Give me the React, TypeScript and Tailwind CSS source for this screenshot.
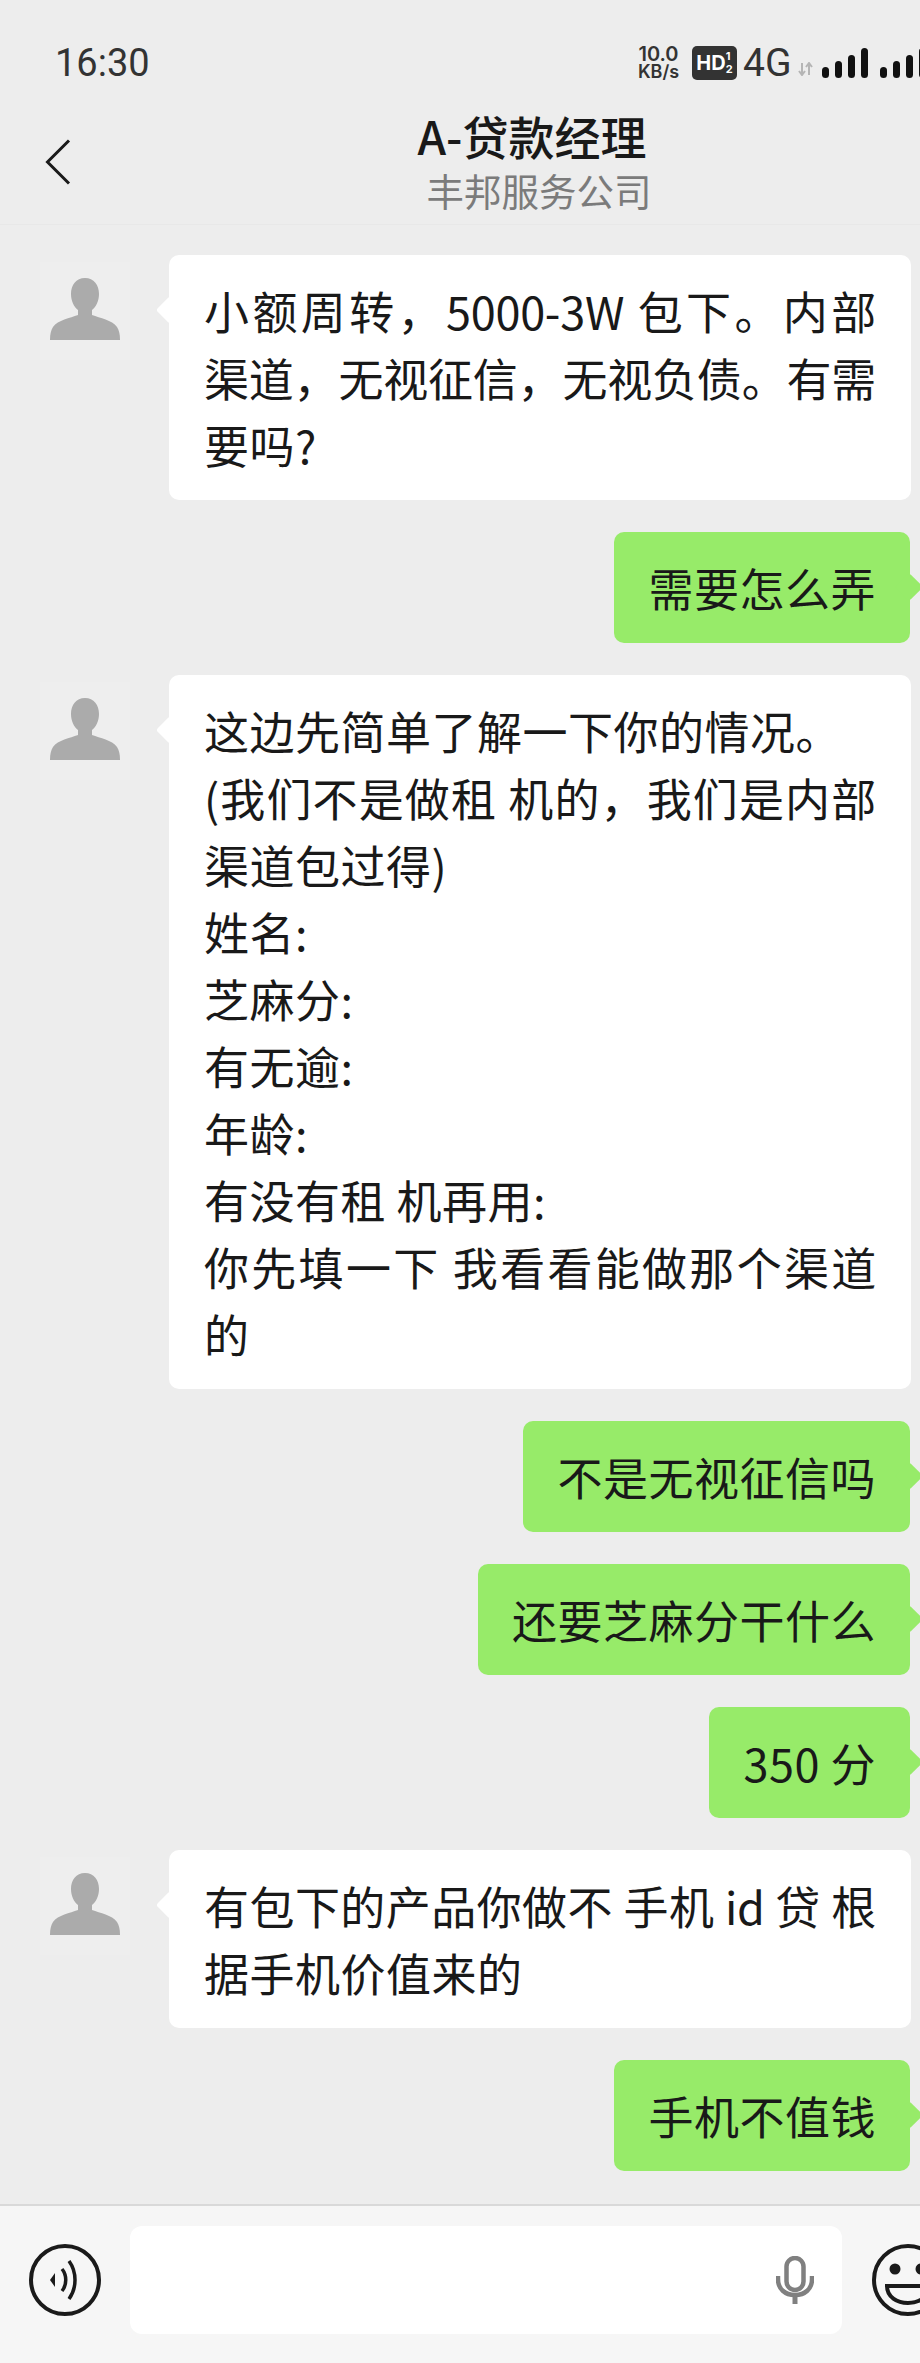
import React from 'react';

const FONT = 'font-["Noto_Sans_CJK_SC","Noto_Sans",sans-serif]';

// full: lines that wrapped in the original, they fill the whole bubble width
type Message = { from: 'them' | 'me'; lines: string[]; full?: number[] };

const messages: Message[] = [
    { from: 'them', lines: ['小额周转，5000-3W 包下。内部', '渠道，无视征信，无视负债。有需', '要吗?'], full: [0, 1] },
    { from: 'me', lines: ['需要怎么弄'] },
    {
        from: 'them',
        lines: [
            '这边先简单了解一下你的情况。',
            '(我们不是做租 机的，我们是内部',
            '渠道包过得)',
            '姓名:',
            '芝麻分:',
            '有无逾:',
            '年龄:',
            '有没有租 机再用:',
            '你先填一下 我看看能做那个渠道',
            '的',
        ],
        full: [1, 8],
    },
    { from: 'me', lines: ['不是无视征信吗'] },
    { from: 'me', lines: ['还要芝麻分干什么'] },
    { from: 'me', lines: ['350 分'] },
    { from: 'them', lines: ['有包下的产品你做不 手机 id 贷 根', '据手机价值来的'], full: [0] },
    { from: 'me', lines: ['手机不值钱'] },
];

const Avatar = () => (
    <div className="mt-[7px] flex h-[98px] w-[90px] shrink-0 items-start justify-center bg-[#eeeeee] pt-[16px]">
        <svg width="70" height="62" viewBox="0 0 70 62">
            <path
                d="M35 0C26 0 21 7 21 16C21 23 24 29 28 32V37C20 40 8 42 3 49C1 52 0 56 0 62H70C70 56 69 52 67 49C62 42 50 40 42 37V32C46 29 49 23 49 16C49 7 44 0 35 0Z"
                fill="#ababab"
            />
        </svg>
    </div>
);

const Bubble = ({ from, lines, full = [] }: Message) => {
    const mine = from === 'me';
    return (
        <div
            className={`relative rounded-[10px] py-[22px] text-[45px] leading-[67px] text-[#191919] ${
                mine ? 'bg-[#97eb69] px-[34px]' : 'w-[742px] bg-white px-[35px]'
            }`}
        >
            <div
                className={`absolute top-[45px] h-[20px] w-[20px] rotate-45 rounded-[3px] ${
                    mine ? 'right-[-9px] bg-[#97eb69]' : 'left-[-9px] bg-white'
                }`}
            />
            {lines.map((line, i) => (
                <div
                    key={i}
                    className={`relative ${
                        full.includes(i) ? 'tracking-[-0.25px] [text-align-last:justify]' : 'tracking-[0.5px]'
                    }`}
                >
                    {line}
                </div>
            ))}
        </div>
    );
};

const SignalBars = () => (
    <svg width="46" height="30" viewBox="0 0 46 30" className="shrink-0">
        <rect x="0" y="19" width="7" height="11" rx="3.5" fill="#111" />
        <rect x="13" y="13" width="7" height="17" rx="3.5" fill="#111" />
        <rect x="26" y="7" width="7" height="23" rx="3.5" fill="#111" />
        <rect x="39" y="0" width="7" height="30" rx="3.5" fill="#111" />
    </svg>
);

const StatusBar = () => (
    <div className="flex h-[46px] items-center pl-[55px] text-[#333333]">
        <span className="w-[581px] shrink-0 font-['Roboto',sans-serif] text-[38px] leading-none">16:30</span>
        <div className="flex w-[45px] shrink-0 flex-col items-center font-['Inter',sans-serif] font-semibold">
            <span className="text-[20px] leading-[17px]">10.0</span>
            <span className="text-[18px] leading-[18px]">KB/s</span>
        </div>
        <div className="ml-[11px] flex h-[34px] w-[45px] shrink-0 items-center justify-center rounded-[5px] bg-[#333333] font-['Inter',sans-serif] font-bold text-white">
            <span className="text-[20px] leading-none">HD</span>
            <span className="flex flex-col text-[11px] leading-[13px]">
                <span>1</span>
                <span>2</span>
            </span>
        </div>
        <span className="ml-[6px] w-[55px] shrink-0 font-['Roboto',sans-serif] text-[39px] leading-none">4G</span>
        <svg width="15" height="14" viewBox="0 0 15 14" className="mr-[9px] mt-[12px] shrink-0">
            <path d="M4 1V13M1 9L4 13L7 9" stroke="#b5b5b5" strokeWidth="2" fill="none" />
            <path d="M11 13V1M8 5L11 1L14 5" stroke="#b5b5b5" strokeWidth="2" fill="none" />
        </svg>
        <SignalBars />
        <div className="ml-[12px] shrink-0">
            <SignalBars />
        </div>
    </div>
);

export default function App() {
    return (
        <div className={`flex h-[2363px] w-[920px] flex-col overflow-hidden bg-[#ededed] ${FONT}`}>
            <header className="h-[225px] shrink-0 overflow-hidden border-b border-[#e8e8e8] pt-[40px]">
                <StatusBar />
                <div className="mt-[21px] flex items-start pl-[45px]">
                    <svg width="26" height="46" viewBox="0 0 26 46" className="mt-[32px] shrink-0">
                        <path d="M24 1.5L2.5 23L24 44.5" stroke="#1a1a1a" strokeWidth="3" fill="none" />
                    </svg>
                    <div className="ml-[345px] flex w-[232px] flex-col items-center whitespace-nowrap">
                        <span className="text-[46px] font-medium leading-[56px] text-[#191919]">A-贷款经理</span>
                        <span className="ml-[14px] mt-[5px] text-[37.5px] leading-[44px] text-[#7b7b7b]">丰邦服务公司</span>
                    </div>
                </div>
            </header>

            <main className="flex min-h-0 flex-1 flex-col gap-[32px] pt-[30px]">
                {messages.map((m, i) =>
                    m.from === 'them' ? (
                        <div key={i} className="flex items-start gap-[39px] pl-[40px]">
                            <Avatar />
                            <Bubble {...m} />
                        </div>
                    ) : (
                        <div key={i} className="flex justify-end pr-[10px]">
                            <Bubble {...m} />
                        </div>
                    ),
                )}
            </main>

            <footer className="flex h-[159px] shrink-0 items-start gap-[30px] border-t-2 border-[#d9d9d9] bg-[#f6f6f6] pl-[29px] pt-[20px]">
                <svg width="72" height="72" viewBox="0 0 72 72" className="mt-[18px] shrink-0">
                    <circle cx="36" cy="36" r="34" stroke="#1a1a1a" strokeWidth="4" fill="none" />
                    <path d="M21 36L26 29V43Z" fill="#1a1a1a" />
                    <path d="M33 25C38 31 38 41 33 47" stroke="#1a1a1a" strokeWidth="3.5" fill="none" />
                    <path d="M40 17C48 28 48 44 40 55" stroke="#1a1a1a" strokeWidth="3.5" fill="none" />
                </svg>
                <div className="-ml-[1px] flex h-[108px] w-[712px] shrink-0 items-center justify-end rounded-[12px] bg-white pr-[28px]">
                    <svg width="38" height="48" viewBox="0 0 38 48" className="shrink-0">
                        <rect x="10.5" y="2" width="17" height="32" rx="8.5" stroke="#808080" strokeWidth="4.5" fill="none" />
                        <path d="M2 20V23C2 33 9 39 19 39C29 39 36 33 36 23V20" stroke="#808080" strokeWidth="4.5" fill="none" />
                        <path d="M19 39V48" stroke="#808080" strokeWidth="5" fill="none" />
                    </svg>
                </div>
                <svg width="72" height="72" viewBox="0 0 72 72" className="mt-[18px] shrink-0">
                    <circle cx="36" cy="36" r="34" stroke="#1a1a1a" strokeWidth="4" fill="none" />
                    <circle cx="23" cy="25" r="5.5" fill="#1a1a1a" />
                    <circle cx="49" cy="25" r="5.5" fill="#1a1a1a" />
                    <path d="M15 42H57C57 53 47 59 36 59C25 59 15 53 15 42Z" stroke="#1a1a1a" strokeWidth="4" fill="none" />
                </svg>
            </footer>
        </div>
    );
}
